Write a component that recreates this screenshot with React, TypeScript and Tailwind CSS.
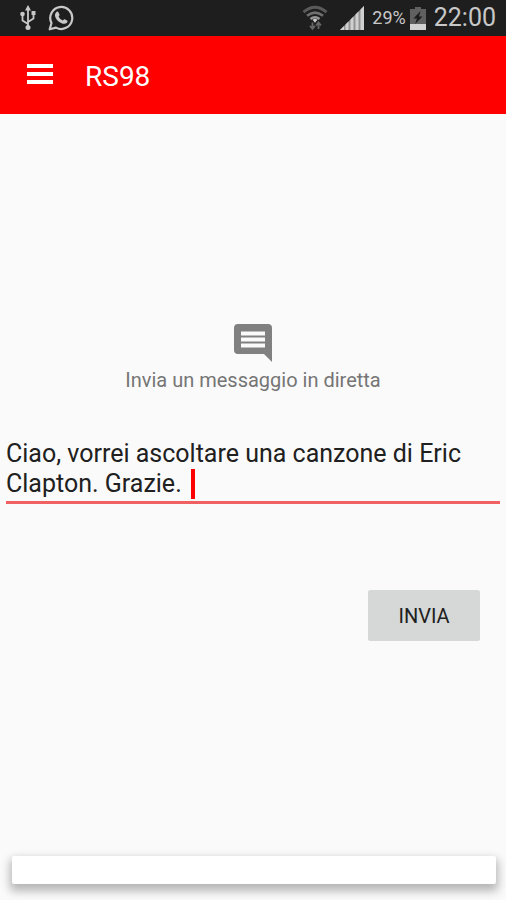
import { useState } from 'react';

const DEFAULT_MESSAGE = 'Ciao, vorrei ascoltare una canzone di Eric Clapton. Grazie. ';

function UsbIcon() {
  return (
    <svg width="16" height="26" viewBox="0 0 16 26" fill="none" stroke="#c8c8c8" strokeWidth="1.8">
      <path d="M8 4v18M8 19 2.5 15.500V10M8 17l5.500-3.500V9" />
      <path d="M8 0 11 5.500H5zM11.500 6h4v4h-4z" fill="#c8c8c8" stroke="none" />
      <circle cx="2.500" cy="9" r="2.300" fill="#c8c8c8" stroke="none" />
      <circle cx="8" cy="22.500" r="2.500" fill="#c8c8c8" stroke="none" />
    </svg>
  );
}

function WhatsAppIcon() {
  return (
    <svg width="26" height="26" viewBox="0 0 26 26" fill="none">
      <path
        d="M1.700 24.300 3.500 18A11 11 0 1 1 8 22.600z"
        stroke="#c8c8c8"
        strokeWidth="2.200"
        strokeLinejoin="round"
      />
      <path
        d="M8.500 7c.6-.6 1.500-.6 1.900.2l1.100 2.400c.2.500 0 .9-.9 1.900.9 1.900 2.300 3.200 4.300 4 .9-1.100 1.300-1.500 1.800-1.300l2.400 1.200c.7.400.4 1.600-.2 2.300-1.100 1.200-2.900 1.500-4.800.8-3.300-1.200-5.600-3.500-6.700-6.200C6.600 10.200 7 8.300 8.500 7z"
        fill="#c8c8c8"
      />
    </svg>
  );
}

function WifiIcon() {
  return (
    <svg width="26" height="26" viewBox="0 0 26 26" fill="none">
      <path d="M1.500 7.200Q13-2.800 24.500 7.200" stroke="#5a5a5a" strokeWidth="3" />
      <path d="M5 10.800q8-6.500 16 0" stroke="#707070" strokeWidth="2.600" />
      <path d="M8.500 14q4.500-3.600 9 0" stroke="#989898" strokeWidth="2.500" />
      <path d="m10.500 14.700 2.500 3 2.500-3q-2.500-1.700-5 0z" fill="#c8c8c8" />
      <path d="M10.500 17.500V23M8 20.800l2.500 3 2.500-3M16.500 24v-5.500M14 20.500l2.500-3 2.500 3" stroke="#666" strokeWidth="1.800" />
    </svg>
  );
}

function SignalIcon() {
  return (
    <svg width="24" height="24" viewBox="0 0 24 24">
      <path d="M0 24 24 0v24z" fill="#929292" />
      <path d="M0 24l4-4v4zM5.500 18.500 8.500 15.500V24h-3zM10.500 13.500l3-3V24h-3zM15.500 8.500l3-3V24h-3zM20.500 3.500 24 0v24h-3.500z" fill="#d0d0d0" />
    </svg>
  );
}

function BatteryIcon() {
  return (
    <svg width="16" height="23" viewBox="0 0 16 23">
      <path d="M5 0h6v2h5v21H0V2h5z" fill="#606060" />
      <path d="M0 17h16v6H0z" fill="#d2d2d2" />
      <path d="M10.500 4 3.500 11.500H7L5 17l7.500-7.500H9z" fill="#1c1c1c" />
    </svg>
  );
}

function MessageIcon() {
  return (
    <svg width="38" height="38" viewBox="0 0 38 38" fill="#808080">
      <path
        fillRule="evenodd"
        d="M4 0h30a4 4 0 0 1 4 4v34l-8-8H4a4 4 0 0 1-4-4V4a4 4 0 0 1 4-4zM7 7.500v4h24v-4zM7 13.500v4h24v-4zM7 19.500v4h24v-4z"
      />
    </svg>
  );
}

function StatusBar() {
  return (
    <div className="flex h-9 items-center justify-between bg-[#1e1e1e] pr-2.5 pl-5 text-[#c8c8c8]">
      <div className="flex items-center gap-3">
        <UsbIcon />
        <WhatsAppIcon />
      </div>
      <div className="flex items-center">
        <WifiIcon />
        <span className="ml-3">
          <SignalIcon />
        </span>
        <span className="ml-2 text-lg">29%</span>
        <span className="ml-1">
          <BatteryIcon />
        </span>
        <span className="ml-2 text-[25px] leading-9">22:00</span>
      </div>
    </div>
  );
}

export default function App() {
  const [message, setMessage] = useState(DEFAULT_MESSAGE);
  const [focused, setFocused] = useState(false);

  return (
    <div className="flex min-h-screen flex-col bg-[#fafafa] font-[Roboto,sans-serif]">
      <StatusBar />

      <header className="flex h-[78px] items-center bg-[#ff0000] pl-[27px] text-white">
        <button type="button" aria-label="Menu" className="-mt-0.5">
          <svg width="26" height="20" viewBox="0 0 26 20" fill="#fff">
            <path d="M0 0h26v4H0zM0 8h26v4H0zM0 16h26v4H0z" />
          </svg>
        </button>
        <h1 className="ml-8 pt-1 text-[28px] leading-9">RS98</h1>
      </header>

      <main className="flex grow flex-col pt-[210px]">
        <div className="flex flex-col items-center gap-1">
          <MessageIcon />
          <label htmlFor="message" className="text-xl text-[#757575]">
            Invia un messaggio in diretta
          </label>
        </div>

        {/* Message field */}
        <div className="relative mx-1.5 mt-[45px]">
          <textarea
            id="message"
            rows={2}
            value={message}
            onChange={(e) => setMessage(e.target.value)}
            onFocus={() => setFocused(true)}
            onBlur={() => setFocused(false)}
            className="block w-full resize-none overflow-hidden border-b-3 border-[#f06060] pb-0.5 text-[25px] leading-[30px] text-[#202020] caret-[#ff0000] outline-none"
          />
          {!focused && message === DEFAULT_MESSAGE && (
            <span className="pointer-events-none absolute top-[30px] left-[185px] h-[30px] w-1 bg-[#ff0000]" />
          )}
        </div>

        <button
          type="button"
          className="mt-[86px] mr-[26px] h-[51px] w-28 self-end rounded-xs bg-[#d6d8d7] text-xl text-[#202020]"
        >
          INVIA
        </button>
      </main>

      <footer className="mr-2.5 mb-4 ml-3 h-7 rounded-xs bg-white shadow-[0_5px_10px_2px_rgba(0,0,0,0.28)]" />
    </div>
  );
}
